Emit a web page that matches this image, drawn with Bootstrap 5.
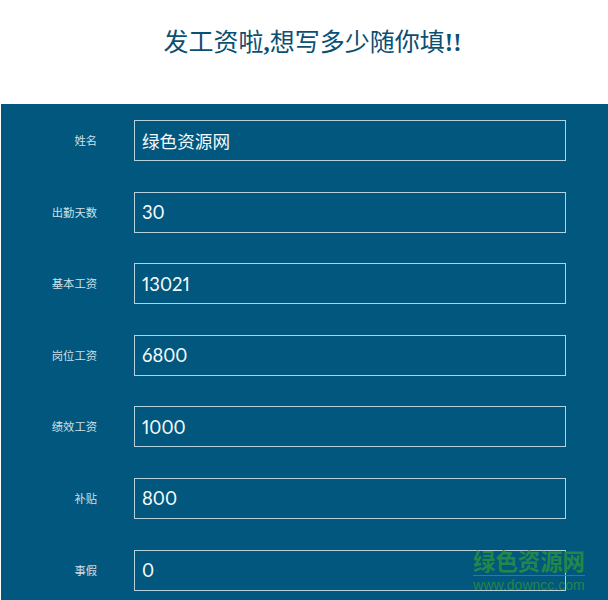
<!DOCTYPE html>
<html lang="zh">
<head>
<meta charset="utf-8">
<title>发工资啦</title>
<link rel="stylesheet" href="https://cdn.jsdelivr.net/npm/bootstrap@5.3.0/dist/css/bootstrap.min.css">
<style>
html,body{height:600px;overflow:hidden;background:#fff;}
body{font-family:"Lato","Noto Sans CJK SC",sans-serif;}
.pay-title{height:104px;padding:25px 0 0 17px;margin:0;color:#0b4f73;font-family:"Liberation Serif","Noto Sans CJK SC",serif;font-size:25px;line-height:36px;font-weight:400;text-align:center;}
.pay-title b{font-weight:700;}
.pay-panel{margin-left:1px;background:#01577e;padding-top:16px;height:496px;overflow:hidden;}
.pay-row{height:41px;margin-bottom:30.6px;}
.pay-label{width:96px;flex:none;text-align:right;color:#cfe0e8;font-size:11.3px;line-height:41px;}
.pay-field{width:432px;flex:none;margin-left:37px;}
.pay-input.form-control{height:41px;background:transparent;border:1px solid #b4d2de;border-radius:0;color:#f4fafc;font-size:18.4px;font-variant-numeric:proportional-nums;padding:0 7px;box-shadow:none;}
.pay-input.pay-cjk{font-size:17.6px;}
.pay-mark{position:absolute;left:473px;top:550px;width:112px;text-align:center;color:#23864b;pointer-events:none;}
.pay-mark-cn{font-size:22.4px;line-height:24px;font-weight:700;border-bottom:1px solid #2e7f6b;padding-bottom:1px;white-space:nowrap;}
.pay-mark-en{font-family:"Liberation Sans",sans-serif;font-size:14px;line-height:18px;white-space:nowrap;}
</style>
</head>
<body>
<h1 class="pay-title">发工资啦<b>,</b>想写多少随你填<b>!!</b></h1>
<form class="pay-panel">
  <div class="pay-row d-flex"><label class="pay-label" for="f1">姓名</label><div class="pay-field"><input id="f1" class="form-control pay-input pay-cjk" value="绿色资源网"></div></div>
  <div class="pay-row d-flex"><label class="pay-label" for="f2">出勤天数</label><div class="pay-field"><input id="f2" class="form-control pay-input" value="30"></div></div>
  <div class="pay-row d-flex"><label class="pay-label" for="f3">基本工资</label><div class="pay-field"><input id="f3" class="form-control pay-input" value="13021"></div></div>
  <div class="pay-row d-flex"><label class="pay-label" for="f4">岗位工资</label><div class="pay-field"><input id="f4" class="form-control pay-input" value="6800"></div></div>
  <div class="pay-row d-flex"><label class="pay-label" for="f5">绩效工资</label><div class="pay-field"><input id="f5" class="form-control pay-input" value="1000"></div></div>
  <div class="pay-row d-flex"><label class="pay-label" for="f6">补贴</label><div class="pay-field"><input id="f6" class="form-control pay-input" value="800"></div></div>
  <div class="pay-row d-flex"><label class="pay-label" for="f7">事假</label><div class="pay-field"><input id="f7" class="form-control pay-input" value="0"></div></div>
</form>
<div class="pay-mark"><div class="pay-mark-cn">绿色资源网</div><div class="pay-mark-en">www.downcc.com</div></div>
<script src="https://cdn.jsdelivr.net/npm/bootstrap@5.3.0/dist/js/bootstrap.bundle.min.js"></script>
</body>
</html>
